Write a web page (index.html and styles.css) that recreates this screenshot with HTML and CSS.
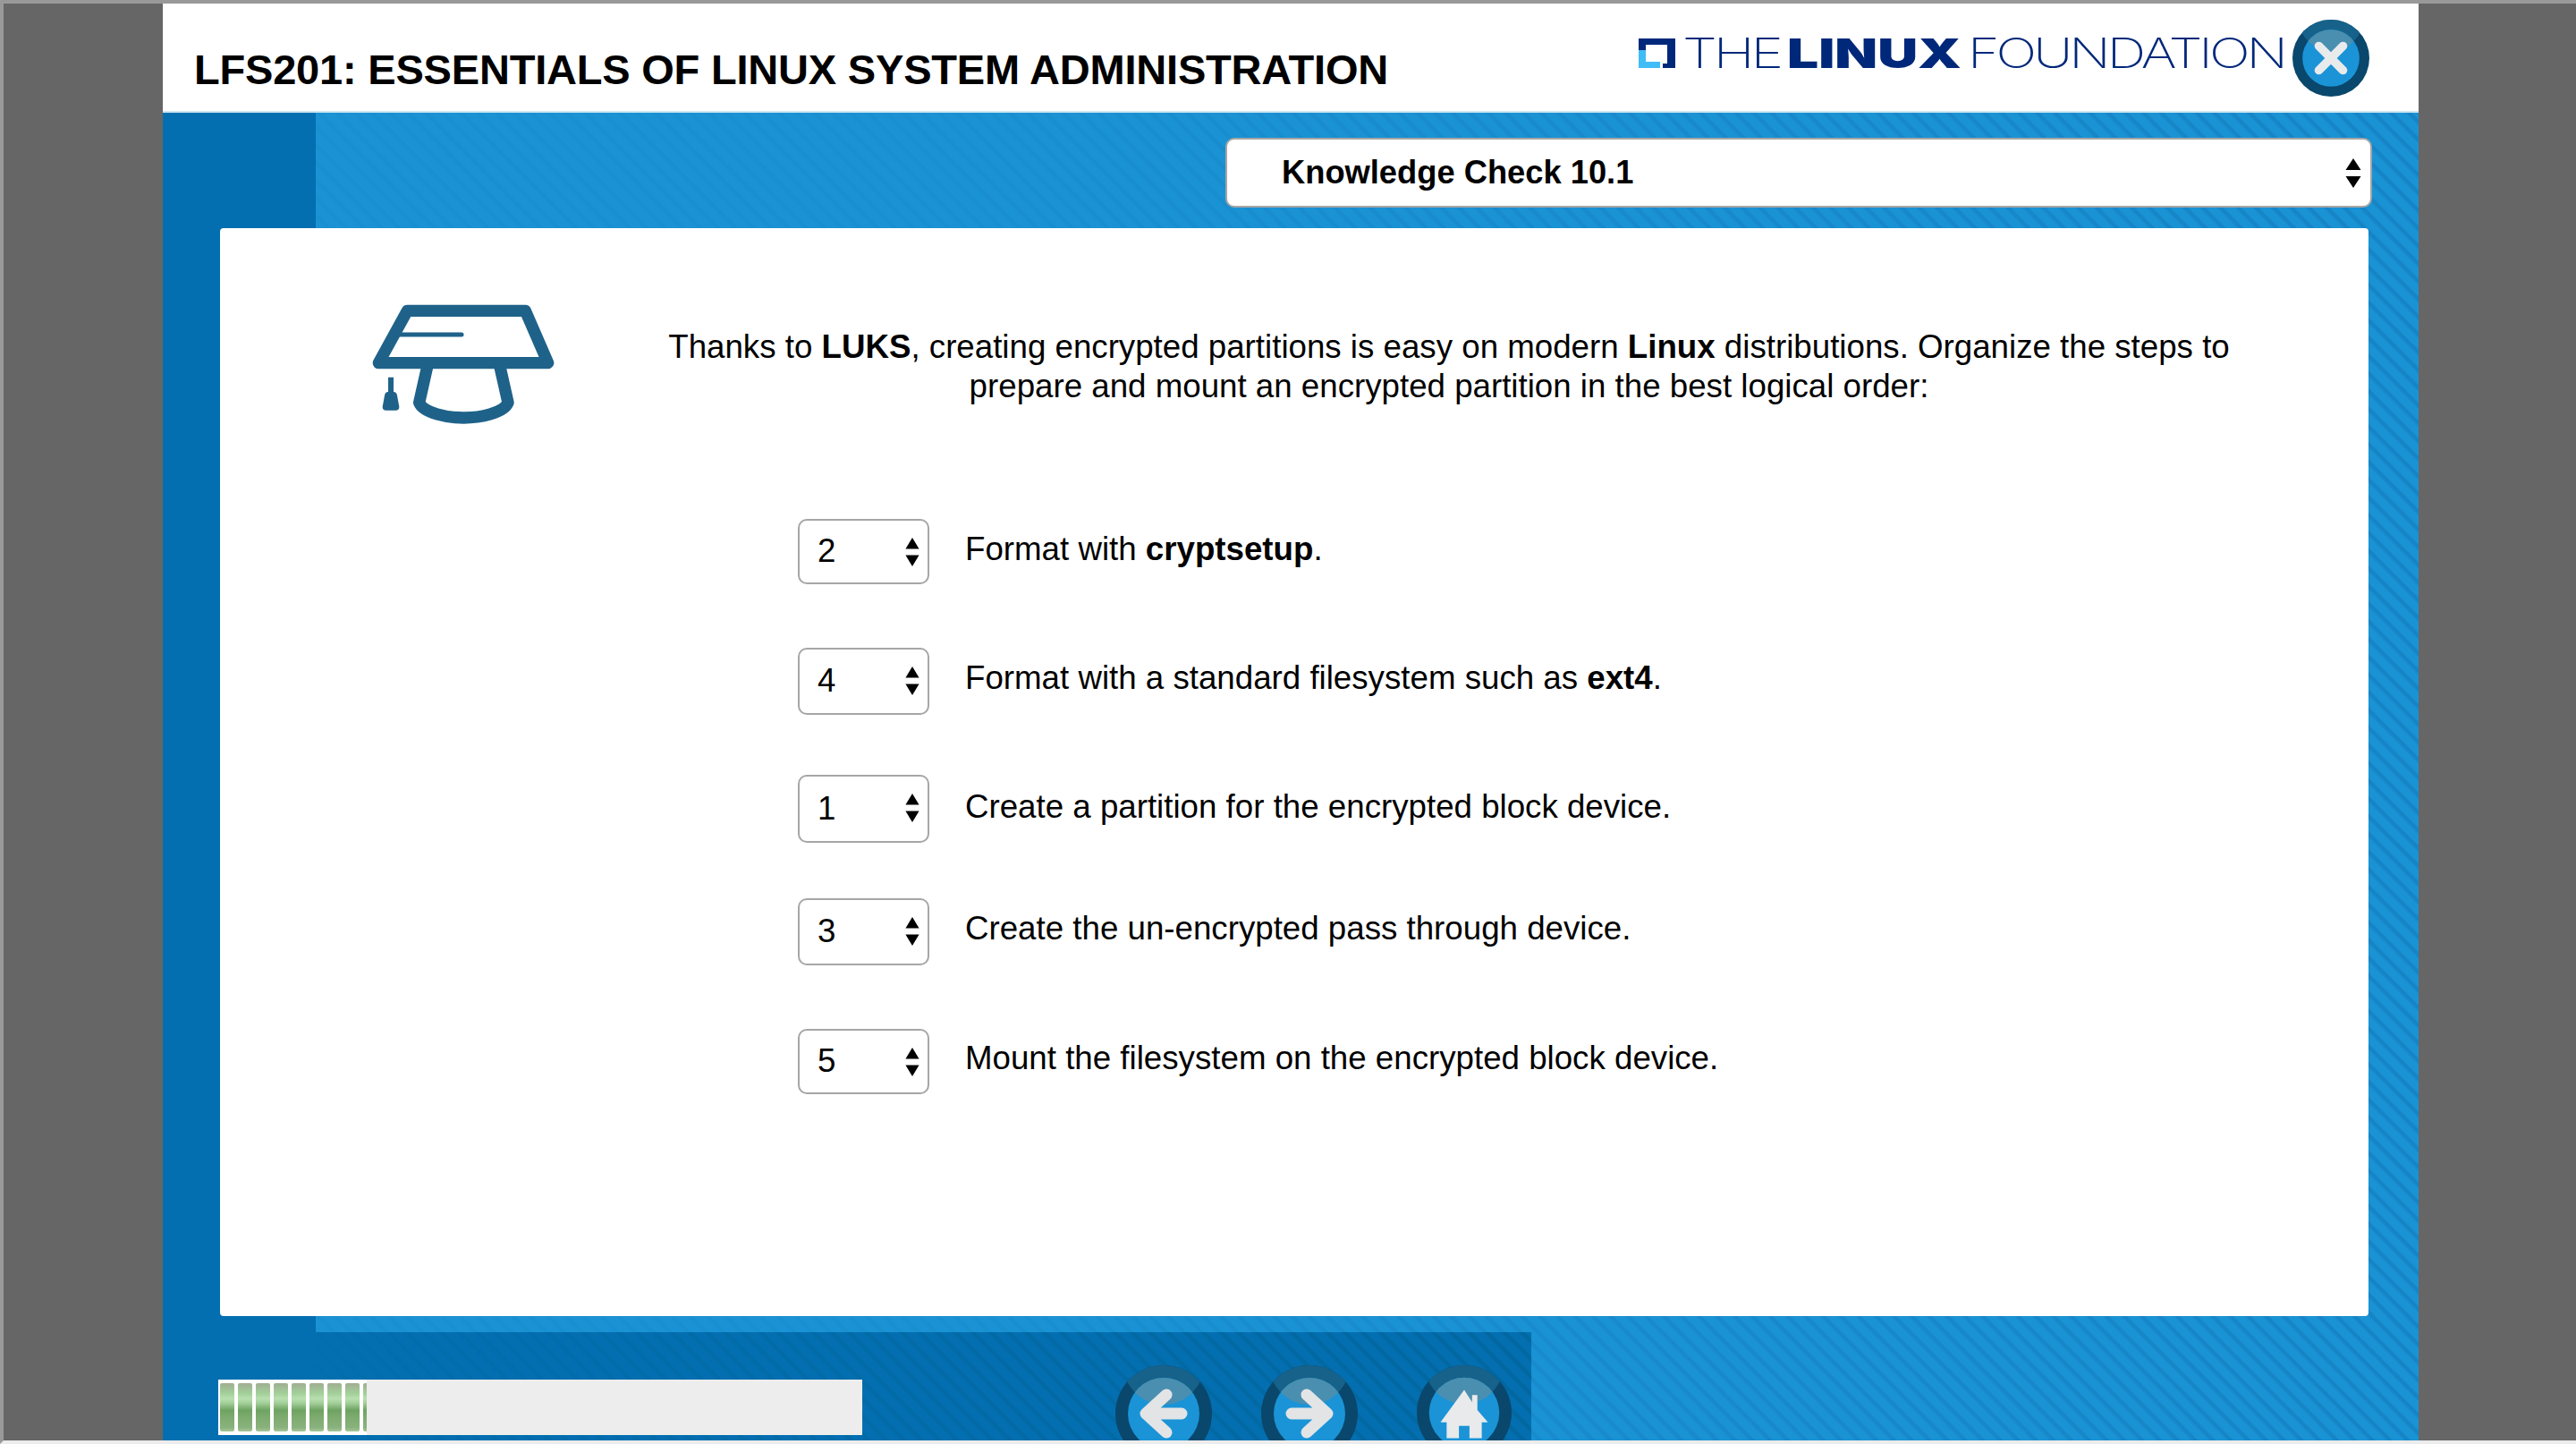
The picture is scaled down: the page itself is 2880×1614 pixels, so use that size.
FILE: index.html
```html
<!DOCTYPE html>
<html lang="en">
<head>
<meta charset="utf-8">
<title>LFS201: Essentials of Linux System Administration</title>
<link rel="stylesheet" href="styles.css">
</head>
<body>
<svg class="defs" width="0" height="0" aria-hidden="true">
  <defs>
    <clipPath id="outer"><circle cx="0" cy="0" r="54"/></clipPath>
    <clipPath id="inner"><circle cx="0" cy="0" r="40"/></clipPath>
    <symbol id="disc" viewBox="-54 -54 108 108">
      <circle r="54" fill="#0a476c"/>
      <g clip-path="url(#outer)"><ellipse cx="0" cy="-58" rx="46" ry="48" fill="#17628a"/></g>
      <circle r="40" fill="#1a94d7"/>
      <g clip-path="url(#inner)"><ellipse cx="0" cy="-58" rx="46" ry="48" fill="#4a8fb0"/></g>
    </symbol>
  </defs>
</svg>
<main class="frame">
  <header class="header">
    <h1 class="title">LFS201: ESSENTIALS OF LINUX SYSTEM ADMINISTRATION</h1>
    <div class="brand">
      <svg class="logo" width="720" height="56" viewBox="0 -11 720 56" role="img" aria-label="The Linux Foundation">
        <path class="logo-dark" d="M0 0H41V33H27V28H32V7H8V13H0Z"/>
        <path class="logo-light" d="M0 13H8V26H24V33H0Z"/>
        <text class="logo-thin" x="49" y="32.5" textLength="109" lengthAdjust="spacingAndGlyphs">THE</text>
        <text class="logo-bold" x="166" y="32.5" textLength="195" lengthAdjust="spacingAndGlyphs">LINUX</text>
        <text class="logo-thin" x="368" y="32.5" textLength="354" lengthAdjust="spacingAndGlyphs">FOUNDATION</text>
      </svg>
      <svg class="close" width="86" height="86" viewBox="-54 -54 108 108" role="img" aria-label="Close">
        <use href="#disc" x="-54" y="-54" width="108" height="108"/>
        <path class="glyph-x" d="M-17 -17L17 17M17 -17L-17 17"/>
      </svg>
    </div>
  </header>
  <div class="main">
    <div class="toolbar">
      <div class="picker picker--wide">
        <select class="select select--wide" aria-label="Section">
          <option>Knowledge Check 10.1</option>
        </select>
        <svg class="arrows arrows--wide" width="18" height="33" viewBox="0 0 18 33"><path d="M9 0L17.5 13H.5ZM.5 20H17.5L9 33Z"/></svg>
      </div>
    </div>
    <section class="card">
      <div class="intro">
        <svg class="cap" width="260" height="170" viewBox="0 0 780 510" aria-hidden="true">
          <path class="cap-line cap-board" d="M196 82H592L668 257H100Z"/>
          <path class="cap-line cap-base" d="M263 270L236 390C250 425 330 441 385 441C440 441 520 425 534 390L507 270"/>
          <path class="cap-thin" d="M172 162H378"/>
          <path class="cap-fill" d="M132 305H150V354Q160 354 162 366L169 404Q169 416 157 416H125Q113 416 113 404L120 366Q122 354 132 354Z"/>
        </svg>
        <p class="question">Thanks to <b>LUKS</b>, creating encrypted partitions is easy on modern <b>Linux</b> distributions. Organize the steps to prepare and mount an encrypted partition in the best logical order:</p>
      </div>
      <ol class="steps">
        <li class="step">
          <div class="picker">
            <select class="select" aria-label="Order"><option>2</option><option>1</option><option>3</option><option>4</option><option>5</option></select>
            <svg class="arrows" width="16" height="32" viewBox="0 0 18 36"><path d="M9 0L17.5 14H.5ZM.5 22H17.5L9 36Z"/></svg>
          </div>
          <span class="label">Format with <b>cryptsetup</b>.</span>
        </li>
        <li class="step">
          <div class="picker">
            <select class="select" aria-label="Order"><option>4</option><option>1</option><option>2</option><option>3</option><option>5</option></select>
            <svg class="arrows" width="16" height="32" viewBox="0 0 18 36"><path d="M9 0L17.5 14H.5ZM.5 22H17.5L9 36Z"/></svg>
          </div>
          <span class="label">Format with a standard filesystem such as <b>ext4</b>.</span>
        </li>
        <li class="step">
          <div class="picker">
            <select class="select" aria-label="Order"><option>1</option><option>2</option><option>3</option><option>4</option><option>5</option></select>
            <svg class="arrows" width="16" height="32" viewBox="0 0 18 36"><path d="M9 0L17.5 14H.5ZM.5 22H17.5L9 36Z"/></svg>
          </div>
          <span class="label">Create a partition for the encrypted block device.</span>
        </li>
        <li class="step">
          <div class="picker">
            <select class="select" aria-label="Order"><option>3</option><option>1</option><option>2</option><option>4</option><option>5</option></select>
            <svg class="arrows" width="16" height="32" viewBox="0 0 18 36"><path d="M9 0L17.5 14H.5ZM.5 22H17.5L9 36Z"/></svg>
          </div>
          <span class="label">Create the un-encrypted pass through device.</span>
        </li>
        <li class="step">
          <div class="picker">
            <select class="select" aria-label="Order"><option>5</option><option>1</option><option>2</option><option>3</option><option>4</option></select>
            <svg class="arrows" width="16" height="32" viewBox="0 0 18 36"><path d="M9 0L17.5 14H.5ZM.5 22H17.5L9 36Z"/></svg>
          </div>
          <span class="label">Mount the filesystem on the encrypted block device.</span>
        </li>
      </ol>
    </section>
  </div>
  <footer class="footer">
    <div class="progress" role="progressbar" aria-valuenow="23" aria-valuemin="0" aria-valuemax="100">
      <div class="progress-fill">
        <span class="seg"></span><span class="seg"></span><span class="seg"></span><span class="seg"></span><span class="seg"></span><span class="seg"></span><span class="seg"></span><span class="seg"></span><span class="seg"></span>
      </div>
    </div>
    <nav class="nav">
      <svg class="nav-btn" width="108" height="108" viewBox="-54 -54 108 108" role="img" aria-label="Back">
        <use href="#disc" x="-54" y="-54" width="108" height="108"/>
        <path class="glyph-arrow" d="M3 -21L-20 0L3 21M-20 0H20"/>
      </svg>
      <svg class="nav-btn nav-btn--next" width="108" height="108" viewBox="-54 -54 108 108" role="img" aria-label="Next">
        <use href="#disc" x="-54" y="-54" width="108" height="108"/>
        <path class="glyph-arrow" d="M-3 -21L20 0L-3 21M20 0H-20"/>
      </svg>
      <svg class="nav-btn nav-btn--home" width="106" height="106" viewBox="-54 -54 108 108" role="img" aria-label="Home">
        <use href="#disc" x="-54" y="-54" width="108" height="108"/>
        <path class="glyph-home" d="M0 -26L9 -12V-20H15V-3L27 11H20V29H6V15H-6V29H-20V11H-27Z"/>
      </svg>
    </nav>
  </footer>
</main>
</body>
</html>
```

FILE: styles.css
```css
:root {
  --hatch: repeating-linear-gradient(45deg, #1a93d5 0 7px, #1583c4 10px 12px, #1a93d5 14px);
  --hatch-dark: repeating-linear-gradient(45deg, #036fb1 0 7px, #02679f 10px 12px, #036fb1 14px);
  --wash: linear-gradient(90deg, rgba(26, 146, 211, 0.8) 0, rgba(26, 146, 211, 0.8) 35%, rgba(26, 146, 211, 0.4) 70%, rgba(26, 146, 211, 0.05) 100%);
  --wash-dark: linear-gradient(90deg, rgba(3, 111, 177, 0.9) 0, rgba(3, 111, 177, 0.6) 30%, rgba(3, 111, 177, 0) 100%);
  --column: linear-gradient(#036fb1, #036fb1) 0 0 / 171px 100% no-repeat;
}

* { box-sizing: border-box; }

html, body { margin: 0; height: 100%; }

body {
  width: 2880px;
  height: 1614px;
  padding: 0 176px 0 178px;
  background: #666666;
  border-top: 4px solid #999999;
  border-left: 4px solid #999999;
  border-bottom: 4px solid #ececec;
  overflow: hidden;
  font-family: "Liberation Sans", Arial, sans-serif;
  color: #000000;
}

.defs { position: absolute; }

.frame {
  width: 2522px;
  height: 1606px;
  display: flex;
  flex-direction: column;
  overflow: hidden;
}

.header {
  height: 122px;
  flex: none;
  display: flex;
  align-items: flex-start;
  justify-content: space-between;
  background: #ffffff;
  box-shadow: inset 0 -2px 0 #cfe5f2;
  padding: 0 55px 0 35px;
}

.title {
  margin: 46px 0 0;
  font-size: 47px;
  letter-spacing: -0.2px;
  line-height: 55px;
  font-weight: 700;
  white-space: nowrap;
}

.brand {
  display: flex;
  align-items: flex-start;
  gap: 11px;
  padding-top: 18px;
}

.logo { margin-top: 10px; display: block; }
.logo-dark { fill: #00287a; }
.logo-light { fill: #3fbdf6; }
.logo-thin { font-family: "Inter", sans-serif; font-weight: 200; font-size: 46px; letter-spacing: -3px; fill: #00287a; }
.logo-bold { font-family: "Inter", sans-serif; font-weight: 900; font-size: 46px; fill: #00287a; }

.close { display: block; }
.glyph-x { stroke: #e9eaec; stroke-width: 12; stroke-linecap: round; fill: none; }

.main {
  flex: none;
  height: 1345px;
  display: flex;
  flex-direction: column;
  background: var(--column), var(--wash), var(--hatch);
}

.toolbar {
  flex: none;
  height: 129px;
  padding: 28px 52px 0 0;
  display: flex;
  justify-content: flex-end;
}

.picker { position: relative; flex: none; width: 147px; }
.picker--wide { width: 1282px; height: 78px; }

.select {
  appearance: none;
  -webkit-appearance: none;
  display: block;
  width: 100%;
  height: 100%;
  margin: 0;
  padding: 0 0 2px 20px;
  background: #ffffff;
  border: 2px solid #a6a6a6;
  border-radius: 10px;
  font-family: "Liberation Sans", Arial, sans-serif;
  font-size: 36.7px;
  color: #000000;
}

.select--wide {
  padding: 0 0 2px 61px;
  font-size: 36.3px;
  font-weight: 700;
}

.arrows {
  position: absolute;
  right: 11px;
  top: 21px;
  fill: #000000;
}

.arrows--wide { right: 12px; top: 23px; }

.card {
  flex: none;
  height: 1216px;
  margin: 0 56px 0 64px;
  background: #ffffff;
  border-radius: 4px;
}

.intro {
  display: flex;
  align-items: flex-start;
  gap: 50px;
  padding: 65px 0 0 144px;
}

.cap { flex: none; display: block; }
.cap-line { fill: none; stroke: #1f6289; stroke-linejoin: round; stroke-linecap: butt; }
.cap-board { stroke-width: 40; }
.cap-base { stroke-width: 40; }
.cap-thin { fill: none; stroke: #1f6289; stroke-width: 15; stroke-linecap: round; }
.cap-fill { fill: #1f6289; }

.question {
  width: 1840px;
  margin: 46px 0 0;
  font-size: 36.7px;
  line-height: 44px;
  text-align: center;
}

.steps {
  list-style: none;
  margin: 90px 0 0;
  padding: 0 0 0 646px;
  display: flex;
  flex-direction: column;
}

.step {
  display: flex;
  align-items: center;
  gap: 40px;
  height: 75px;
  font-size: 36.7px;
}

.step:nth-child(1), .step:nth-child(5) { height: 73px; }
.step:nth-child(3) { height: 76px; }
.step:nth-child(2) { margin-top: 71px; }
.step:nth-child(3) { margin-top: 67px; }
.step:nth-child(4) { margin-top: 62px; }
.step:nth-child(5) { margin-top: 71px; }
.step .picker { height: 100%; }

.label { margin-bottom: 6px; line-height: 44px; }
.step:nth-child(2) .label, .step:nth-child(4) .label, .step:nth-child(5) .label { margin-bottom: 8px; }
.step:nth-child(3) .label { margin-bottom: 5px; }

.footer {
  flex: 1;
  min-height: 0;
  display: flex;
  align-items: flex-start;
  overflow: hidden;
  padding: 55px 0 0 62px;
  background:
    var(--column),
    var(--wash-dark) 0 18px / 1530px 100% no-repeat,
    var(--hatch-dark) 0 18px / 1530px 100% no-repeat,
    var(--wash),
    var(--hatch);
}

.progress {
  flex: none;
  width: 720px;
  height: 62px;
  margin-top: 16px;
  background: #ededed;
}

.progress-fill {
  width: 166px;
  height: 100%;
  padding: 4px 0 4px 2px;
  display: flex;
  gap: 4px;
  overflow: hidden;
  background: #ffffff;
}

.seg {
  flex: none;
  width: 16px;
  height: 100%;
  border-radius: 2px;
  background: linear-gradient(#9fae92 0, #a3d199 22%, #b9dfb0 32%, #a0cd96 42%, #6ea361 56%, #7dab6f 70%, #89b27c 92%, #a6c69c 100%);
}

.nav {
  flex: none;
  display: flex;
  align-items: flex-start;
  margin-left: 283px;
}

.nav-btn { flex: none; display: block; }
.nav-btn--next { margin-left: 55px; }
.nav-btn--home { margin-left: 66px; }

.glyph-arrow { fill: none; stroke: #e3e4e6; stroke-width: 13; stroke-linecap: round; stroke-linejoin: round; }
.glyph-home { fill: #e9eaec; }
```
